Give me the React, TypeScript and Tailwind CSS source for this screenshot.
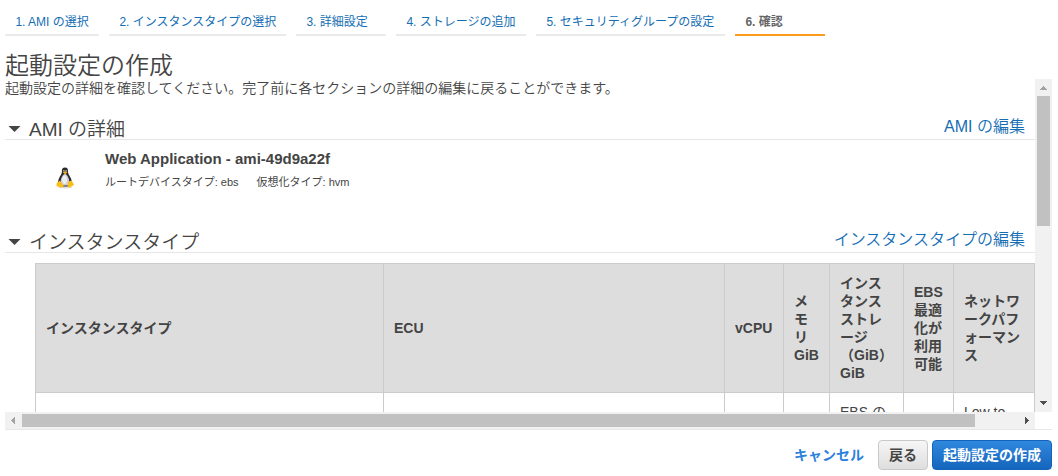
import type { ReactNode } from "react";

const steps = [
  { label: "1. AMI の選択", width: "w-[94px]" },
  { label: "2. インスタンスタイプの選択", width: "w-[177px]" },
  { label: "3. 詳細設定", width: "w-[90px]" },
  { label: "4. ストレージの追加", width: "w-[130px]" },
  { label: "5. セキュリティグループの設定", width: "w-[189px]" },
  { label: "6. 確認", width: "w-[90px]", active: true },
];

const columns: string[][] = [
  ["インスタンスタイプ"],
  ["ECU"],
  ["vCPU"],
  ["メ", "モ", "リ", "GiB"],
  ["インス", "タンス", "ストレ", "ージ", "（GiB）", "GiB"],
  ["EBS", "最適", "化が", "利用", "可能"],
  ["ネットワ", "ークパフ", "ォーマン", "ス"],
];

const values = ["", "", "", "", "EBS の", "", "Low to"];

function Arrow({ points, className }: { points: string; className: string }) {
  return (
    <svg width="17" height="17" viewBox="0 0 17 17" shapeRendering="crispEdges" className={className}>
      <polygon points={points} />
    </svg>
  );
}

function SectionHeader({ title, link }: { title: string; link: string }) {
  return (
    <div className="flex h-[27px] shrink-0 items-start justify-between border-b border-[#e6e6e6] pr-[10px]">
      <div className="flex items-start">
        <svg width="24" height="26" viewBox="0 0 24 26" className="shrink-0 fill-[#444]">
          <polygon points="3.5,13 15.5,13 9.5,19" />
        </svg>
        <h2 className="pt-[5px] text-[19px] leading-[24px] font-[350]">{title}</h2>
      </div>
      <a className="text-[16px] leading-[28px] font-[350] text-[#146eb4]">{link}</a>
    </div>
  );
}

function Tux() {
  return (
    <svg width="18" height="22" viewBox="0 0 18 22">
      <ellipse cx="9" cy="20.4" rx="7" ry="1" fill="#ddd" />
      <path d="M9 .5C6.600.5 5.700 2 5.900 4.400c.1 2-.9 3-2 5-1.300 2.200-2 4.300-1.700 6.200L6 19.500h6l3.600-3.900c.3-2.100-.4-4.200-1.700-6.200-1.100-2-1.900-3-1.900-5C12.200 2 11.400.5 9 .5Z" fill="#2c2c2c" />
      <path d="M8.900 7c-1.700.3-2.700 2.400-3.700 4.500-1 2.300-.6 5.300 1 7h5.400c1.900-1.800 1.900-5 1-7.200C11.700 9.300 10.700 6.700 8.900 7Z" fill="#cdd0d6" />
      <ellipse cx="8.600" cy="12.800" rx="2.300" ry="4.200" fill="#eceef2" />
      <circle cx="7.900" cy="3.800" r=".9" fill="#aaa" />
      <circle cx="10.200" cy="3.800" r=".9" fill="#aaa" />
      <path d="m6.800 5.500 2.200-1.200 2.400 1.200L9.100 7.200Z" fill="#f3b21b" />
      <path d="m2.900 13.700 1.500.5 3.100 4c.3 1.600-.8 2.600-2.200 2.300L.9 19.300c-1-.4-.2-1.700-.2-3.100.1-.9.9-.5 1.600-1Z" fill="#fbbd18" />
      <path d="m15 13.700-2.700.9-.7 4.200c.2 1.700 1.800 2.200 3 1.200l2.600-1.600c1.200-.8.400-1.500-.2-2.400-.2-.9-.7-1.800-2-2.300Z" fill="#fbbd18" />
    </svg>
  );
}

function Button({ children, className }: { children: ReactNode; className: string }) {
  return (
    <button className={`h-[30px] rounded-[4px] border text-[14px] leading-[28px] font-bold ${className}`}>
      {children}
    </button>
  );
}

export default function App() {
  return (
    <div className="flex h-[476px] w-[1058px] flex-col overflow-hidden bg-white pr-[6px] pl-[5px] font-['Liberation_Sans','Noto_Sans_CJK_JP',sans-serif] text-[#444]">
      <nav className="flex h-[36px] shrink-0 gap-[10px] pt-[11px]">
        {steps.map((s) => (
          <div
            key={s.label}
            className={`${s.width} h-[25px] border-b-2 pl-[10.400px] text-[12px] leading-[22px] whitespace-nowrap ${
              s.active ? "border-[#ff9c1a] font-bold text-[#666]" : "border-[#eaeaea] text-[#146eb4]"
            }`}
          >
            {s.label}
          </div>
        ))}
      </nav>

      <header className="h-[43px] shrink-0 pt-[15px]">
        <h1 className="text-[24px] leading-[29px] font-[350]">起動設定の作成</h1>
        <p className="text-[14px] leading-[16px] font-[350]">起動設定の詳細を確認してください。完了前に各セクションの詳細の編集に戻ることができます。</p>
      </header>

      <div className="flex h-[333px] shrink-0">
        <main className="flex w-[1030px] flex-col overflow-hidden pt-[34px]">
          <SectionHeader title="AMI の詳細" link="AMI の編集" />
          <div className="flex h-[86px] shrink-0">
            <div className="w-[100px] shrink-0 pt-[27px] pl-[51px]">
              <Tux />
            </div>
            <div className="pt-[9px]">
              <div className="text-[15px] leading-[20px] font-bold">Web Application - ami-49d9a22f</div>
              <div className="flex gap-[18px] pt-[5px] text-[11px] leading-[16px]">
                <span>ルートデバイスタイプ: ebs</span>
                <span>仮想化タイプ: hvm</span>
              </div>
            </div>
          </div>
          <SectionHeader title="インスタンスタイプ" link="インスタンスタイプの編集" />
          <div className="mt-[10px] ml-[30px] grid shrink-0 grid-cols-[348px_341px_59px_46px_74px_50px_81px] border-t border-l border-[#ccc] text-[14px] leading-[18px]">
            {columns.map((lines) => (
              <div
                key={lines.join("")}
                className="flex h-[129px] flex-col justify-center border-r border-b border-[#ccc] bg-[#ddd] pl-[10px] font-bold whitespace-nowrap"
              >
                {lines.map((line) => (
                  <span key={line}>{line}</span>
                ))}
              </div>
            ))}
            {values.map((v, i) => (
              <div key={i} className="h-[60px] border-r border-[#ccc] pt-[10px] pl-[10px] whitespace-nowrap">
                {v}
              </div>
            ))}
          </div>
        </main>
        <div className="flex w-[17px] flex-col justify-between bg-[#f1f1f1]">
          <Arrow points="5,11 12,11 8.5,7" className="fill-[#a3a3a3]" />
          <div className="mx-[2px] mb-auto h-[130px] bg-[#c1c1c1]" />
          <Arrow points="5,6 12,6 8.5,10" className="fill-[#505050]" />
        </div>
      </div>

      <div className="flex h-[17px] w-[1030px] shrink-0 bg-[#f1f1f1]">
        <Arrow points="10,5 10,12 6,8.5" className="fill-[#a3a3a3]" />
        <div className="my-[2px] mr-auto w-[953px] bg-[#c1c1c1]" />
        <Arrow points="7,5 7,12 11,8.5" className="fill-[#505050]" />
      </div>

      <footer className="flex h-[47px] shrink-0 items-start justify-end border-t border-[#e8e8e8] pt-[10px]">
        <a className="mr-[14px] text-[14px] leading-[30px] font-bold text-[#2a80dc]">キャンセル</a>
        <Button className="mr-[4px] w-[50px] border-[#c8c8c8] bg-linear-to-b from-[#f6f6f6] to-[#dedede] text-[#444]">戻る</Button>
        <Button className="w-[120px] border-[#1464ba] bg-linear-to-b from-[#2f88dd] to-[#1565bd] text-white">
          起動設定の作成
        </Button>
      </footer>
    </div>
  );
}
